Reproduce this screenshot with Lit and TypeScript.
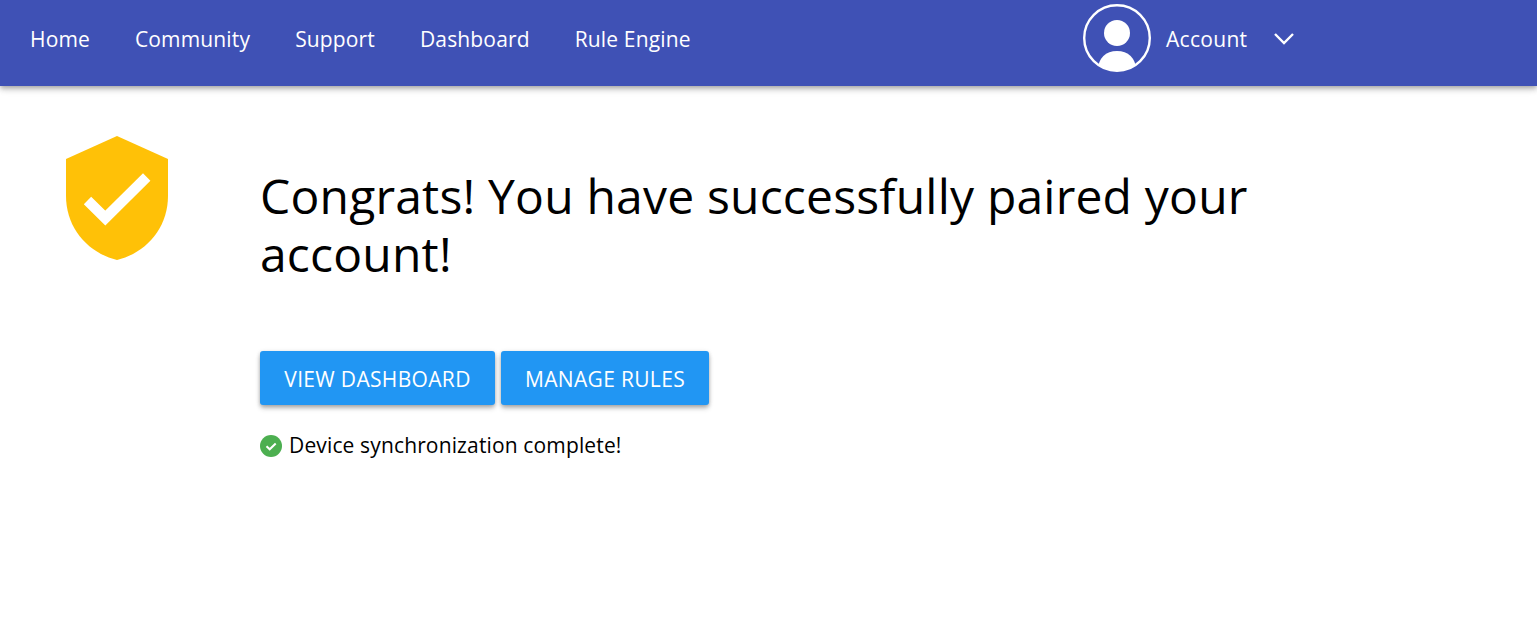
import { LitElement, html, css } from "lit";
import { customElement } from "lit/decorators.js";

@customElement("app-root")
export class AppRoot extends LitElement {
  static styles = css`
    :host { display: block; font-family: "Open Sans", "Noto Sans", sans-serif; color: #000; background: #fff; min-height: 632px; }
    * { box-sizing: border-box; }
    .bar { height: 86px; background: #3f51b5; color: #fff; box-shadow: 0 2px 4px -1px rgba(0,0,0,.2), 0 4px 5px 0 rgba(0,0,0,.14), 0 1px 10px 0 rgba(0,0,0,.12); display: flex; padding: 4px 0 14px 30px; align-items: center; position: relative; }
    .nav { display: flex; gap: 45px; font-size: 21px; letter-spacing: 0.15px; line-height: 28px; width: 1053px; margin-top: 2px; }
    .account { display: flex; align-items: center; font-size: 21px; letter-spacing: 0.3px; }
    .avatar { width: 68px; height: 68px; display: block; margin-right: 15px; }
    .label { margin-top: 2px; }
    .chev { width: 22px; height: 14px; margin-left: 26px; display: block; }
    .main { display: flex; padding: 50px 0 0 66px; }
    .shield { width: 102px; height: 124px; display: block; flex: none; margin-right: 92px; }
    .content { width: 1010px; padding-top: 31px; }
    h1 { margin: 0; font-weight: 400; font-size: 48px; line-height: 58px; letter-spacing: 0.2px; }
    .actions { display: flex; gap: 6px; margin-top: 68px; }
    button { height: 54px; border: 0; border-radius: 3px; background: #2196f3; color: #fff; font: inherit; font-size: 21px; letter-spacing: 0.33px; text-transform: uppercase; padding: 2px 0 0; box-shadow: 0 2px 4px -1px rgba(0,0,0,.25), 0 4px 5px 0 rgba(0,0,0,.14), 0 1px 5px 0 rgba(0,0,0,.12); }
    .b1 { width: 235px; }
    .b2 { width: 208px; }
    .status { display: flex; align-items: center; gap: 7px; margin-top: 26px; font-size: 21px; letter-spacing: 0.14px; line-height: 29px; }
    .ok { width: 22px; height: 22px; display: block; }
  `;

  render() {
    return html`
      <header class="bar">
        <nav class="nav">
          <span>Home</span><span>Community</span><span>Support</span><span>Dashboard</span><span>Rule Engine</span>
        </nav>
        <div class="account">
          <svg class="avatar" viewBox="0 0 68 68">
            <defs><clipPath id="c"><circle cx="34" cy="34" r="33"/></clipPath></defs>
            <circle cx="34" cy="34" r="32.800" fill="none" stroke="#fff" stroke-width="2.400"/>
            <circle cx="34" cy="29" r="13" fill="#fff"/>
            <path d="M15 66C15 54 23 47 34 47s19 7 19 19c-5 2-12 3-19 3s-14-1-19-3z" fill="#fff" clip-path="url(#c)"/>
          </svg>
          <span class="label">Account</span>
          <svg class="chev" viewBox="0 0 22 14"><path d="M2 3l9 9 9-9" fill="none" stroke="#fff" stroke-width="2.400"/></svg>
        </div>
      </header>
      <main class="main">
        <svg class="shield" viewBox="0 0 102 124">
          <path d="M51 0L102 23V60C102 92 80 117 51 124C22 117 0 92 0 60V23Z" fill="#ffc107"/>
          <path d="M21.500 64.500L39.300 82L80.700 41" fill="none" stroke="#fff" stroke-width="10.500"/>
        </svg>
        <div class="content">
          <h1>Congrats! You have successfully paired your account!</h1>
          <div class="actions">
            <button class="b1">View Dashboard</button>
            <button class="b2">Manage Rules</button>
          </div>
          <div class="status">
            <svg class="ok" viewBox="0 0 22 22"><circle cx="11" cy="11" r="11" fill="#4caf50"/><path d="M6.500 11.200l3.200 3.100 6-5.800" fill="none" stroke="#fff" stroke-width="2"/></svg>
            <span>Device synchronization complete!</span>
          </div>
        </div>
      </main>
    `;
  }
}
